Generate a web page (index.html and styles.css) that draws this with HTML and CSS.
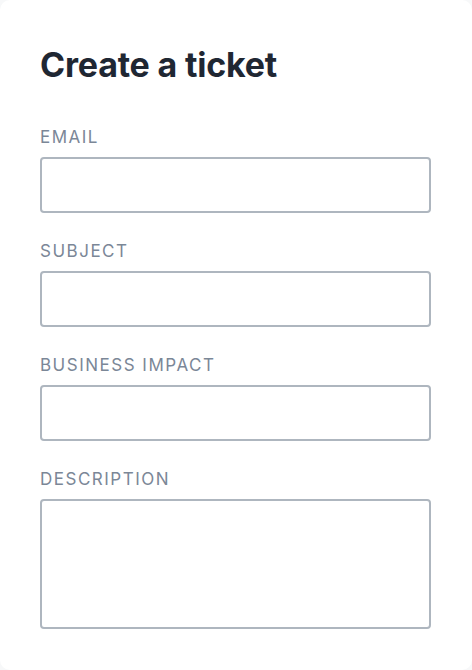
FILE: index.html
```html
<!DOCTYPE html>
<html lang="en">
<head>
    <meta charset="UTF-8">
    <meta name="viewport" content="width=device-width, initial-scale=1.0">
    <title>Create a ticket</title>
    <link rel="stylesheet" href="styles.css">
</head>
<body>
    <div class="ticket-card">
        <h1>Create a ticket</h1>
        <form class="ticket-form">
            <label class="field">
                <span class="field-label">Email</span>
                <input type="email" class="field-input">
            </label>
            <label class="field">
                <span class="field-label">Subject</span>
                <input type="text" class="field-input">
            </label>
            <label class="field">
                <span class="field-label">Business impact</span>
                <input type="text" class="field-input">
            </label>
            <label class="field">
                <span class="field-label">Description</span>
                <textarea class="field-input field-textarea"></textarea>
            </label>
        </form>
    </div>
</body>
</html>
```

FILE: styles.css
```css
html, body {
    margin: 0;
    padding: 0;
    background-color: #f7f8f9;
}
body {
    font-family: 'Inter', 'Liberation Sans', sans-serif;
    color: #1f2733;
    height: 670px;
    overflow: hidden;
}
.ticket-card {
    background-color: #ffffff;
    border-radius: 10px;
    height: 670px;
    box-sizing: border-box;
    padding: 45px 41px 0 40px;
}
.ticket-card h1 {
    margin: 0 0 42px;
    font-size: 34px;
    font-weight: 700;
    line-height: 40px;
    letter-spacing: -0.2px;
    font-variant-ligatures: none;
    color: #1f2733;
}
.ticket-form {
    display: flex;
    flex-direction: column;
    gap: 28px;
}
.field {
    display: flex;
    flex-direction: column;
    gap: 10px;
}
.field-label {
    font-size: 17px;
    line-height: 20px;
    text-transform: uppercase;
    letter-spacing: 1.5px;
    color: #7b8797;
}
.field-input {
    display: block;
    box-sizing: border-box;
    width: 100%;
    height: 56px;
    margin: 0;
    border: 2px solid #aeb6bf;
    border-radius: 4px;
    background: #ffffff;
    font: inherit;
    outline: none;
}
.field-textarea {
    height: 130px;
    resize: none;
}
```
